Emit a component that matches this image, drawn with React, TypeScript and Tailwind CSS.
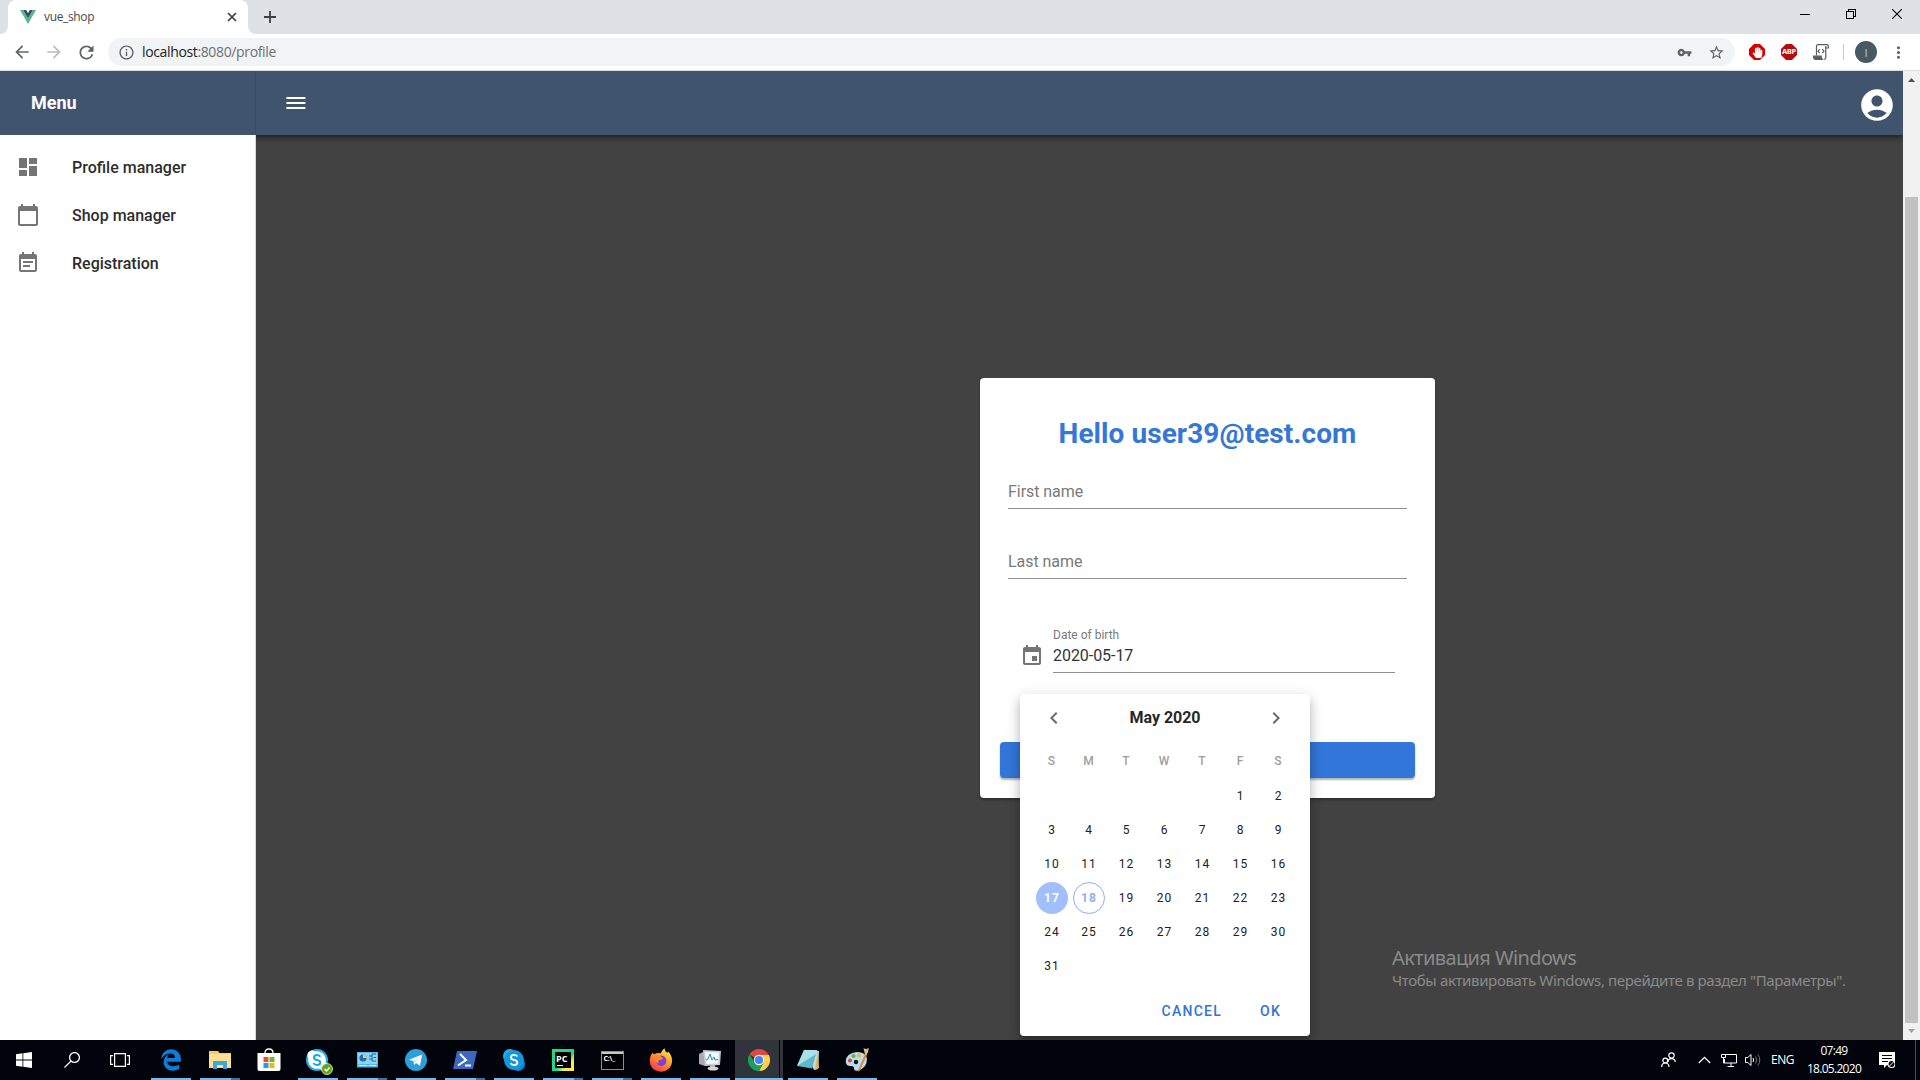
import React from "react";
import {
  MdAccountCircle,
  MdArrowBack,
  MdArrowForward,
  MdCalendarToday,
  MdChevronLeft,
  MdChevronRight,
  MdDashboard,
  MdEvent,
  MdEventNote,
  MdInfoOutline,
  MdMoreVert,
  MdRefresh,
  MdStarBorder,
  MdVpnKey,
} from "react-icons/md";
import { FaEdgeLegacy, FaHandPaper, FaSkype } from "react-icons/fa";

function TabStrip() {
  return (
    <div className="flex h-[34px] items-stretch bg-[#dee1e6]">
      <div className="h-full w-2 bg-white">
        <div className="h-full w-2 rounded-br-lg bg-[#dee1e6]" />
      </div>
      <div className="flex w-60 items-center rounded-t-lg bg-white pr-[10px] pl-3">
        <svg width="16" height="14" viewBox="0 0 16 14">
          <path d="M0 0h3.2L8 8.2 12.8 0H16L8 14z" fill="#53b987" />
          <path d="M3.2 0h3L8 3.2 9.8 0h3L8 8.2z" fill="#34495e" />
        </svg>
        <span className="ml-2 text-[12px] leading-4 tracking-[-0.35px] text-[#45494d]">vue_shop</span>
        <svg className="ml-auto" width="12" height="12" viewBox="0 0 12 12" stroke="#3c4043" strokeWidth="1.7">
          <path d="M2 2l8 8M10 2l-8 8" />
        </svg>
      </div>
      <div className="h-full w-2 bg-white">
        <div className="h-full w-2 rounded-bl-lg bg-[#dee1e6]" />
      </div>
      <svg className="mt-[11px] ml-2" width="12" height="12" viewBox="0 0 12 12" stroke="#3c4043" strokeWidth="1.8">
        <path d="M6 0v12M0 6h12" />
      </svg>
      <div className="mt-[9px] mr-[18px] ml-auto flex gap-9">
        <svg width="10" height="10" viewBox="0 0 10 10" stroke="#000" shapeRendering="crispEdges">
          <path d="M0 5.5h10" />
        </svg>
        <svg width="10" height="10" viewBox="0 0 10 10" stroke="#000" fill="none" shapeRendering="crispEdges">
          <path d="M.5 2.5h7v7h-7zM2.5 2.5v-2h7v7h-2" />
        </svg>
        <svg width="10" height="10" viewBox="0 0 10 10" stroke="#000" strokeWidth="1.1">
          <path d="M0 0l10 10M10 0L0 10" />
        </svg>
      </div>
    </div>
  );
}

function Toolbar() {
  return (
    <div className="flex h-[37px] items-center border-b border-[#d9dbde] bg-white pl-3 text-[#5f6368]">
      <MdArrowBack size={20} />
      <MdArrowForward size={20} className="ml-3 text-[#babcbe]" />
      <MdRefresh size={21} className="ml-3" />
      <div className="ml-[11px] flex h-7 w-[1627px] items-center rounded-full bg-[#f1f3f4] pr-[10px] pl-[10px]">
        <MdInfoOutline size={17} />
        <span className="ml-[7px] text-[14px] leading-5 tracking-[-0.36px] text-[#6c7074]">
          <span className="text-[#202124]">localhost</span>:8080/profile
        </span>
        <MdVpnKey size={15} className="ml-auto" />
        <MdStarBorder size={17} className="ml-4" />
      </div>
      <div className="ml-[14px] flex items-center">
        <div className="relative flex size-4 items-center justify-center">
          <svg className="absolute inset-0" width="16" height="16" viewBox="0 0 16 16">
            <path d="M5 0h6l5 5v6l-5 5H5l-5-5V5z" fill="#d50000" />
          </svg>
          <FaHandPaper size={11} className="relative text-white" />
        </div>
        <div className="relative ml-4 flex size-4 items-center justify-center">
          <svg className="absolute inset-0" width="16" height="16" viewBox="0 0 16 16">
            <path d="M5 0h6l5 5v6l-5 5H5l-5-5V5z" fill="#b80d0d" />
          </svg>
          <span className="relative text-[7.5px] leading-none font-bold tracking-[-0.3px] text-white">ABP</span>
        </div>
        <svg className="ml-4" width="16" height="16" viewBox="0 0 16 16" fill="none" stroke="#5a5d61" strokeWidth="1.2">
          <path d="M3.5 11.5V2.2Q3.5.7 5 .7h9q1.300 0 1.300 1.500V4H12.800" />
          <path d="M12.800 2v11.500q0 1.800-1.800 1.800" />
          <path d="M.6 12.200h7.600v1.400q.2 1.700 2 1.700H2.200Q.6 15.300.6 12.200z" fill="#5a5d61" />
          <path d="M6.800 5.200L5 7.200l1.800 2M9.200 5.200l1.800 2-1.800 2" />
        </svg>
        <div className="ml-[14px] h-4 w-px bg-[#c8cacd]" />
        <div className="ml-[11px] flex size-[22px] items-center justify-center rounded-full bg-[#455a64] text-[11px] leading-none text-[#c4cdd1]">
          I
        </div>
        <MdMoreVert size={19} className="ml-[12px]" />
      </div>
    </div>
  );
}

const menu = [
  { label: "Profile manager", icon: MdDashboard },
  { label: "Shop manager", icon: MdCalendarToday },
  { label: "Registration", icon: MdEventNote },
];

function Sidebar() {
  return (
    <aside className="relative z-20 w-64 shrink-0 border-r border-[#d8d8d8] bg-white pt-2">
      {menu.map(({ label, icon: Icon }) => (
        <div key={label} className="flex h-12 items-center px-4">
          <Icon size={24} className="text-[#757575]" />
          <span className="mt-[2px] ml-8 text-[16px] leading-5 font-medium text-[#2d2d2d]">{label}</span>
        </div>
      ))}
    </aside>
  );
}

function AppBar() {
  return (
    <header className="relative z-10 flex h-16 bg-[#41546e] text-white shadow-[0_2px_4px_-1px_rgba(0,0,0,0.3),0_4px_5px_rgba(0,0,0,0.2),0_1px_10px_rgba(0,0,0,0.15)]">
      <div className="flex w-64 items-center border-r border-[#394b64] pl-[31px]">
        <span className="text-[18px] leading-6 font-bold">Menu</span>
      </div>
      <div className="flex flex-1 items-center pr-[7px] pl-[30px]">
        <svg width="20" height="12" viewBox="0 0 20 12" fill="#fff">
          <path d="M.4 0h19v2H.4zM.4 5h19v2H.4zM.4 10h19v2H.4z" />
        </svg>
        <MdAccountCircle size={38} className="mt-1 ml-auto" />
      </div>
    </header>
  );
}

const weekdays = ["S", "M", "T", "W", "T", "F", "S"];
const blanks = [0, 1, 2, 3, 4];
const days = Array.from({ length: 31 }, (_, i) => i + 1);

function Day({ n }: { n: number }) {
  if (n === 17)
    return (
      <span className="flex size-8 items-center justify-center rounded-full bg-[#a0bffc] pl-px font-bold text-white">
        17
      </span>
    );
  if (n === 18)
    return (
      <span className="flex size-8 items-center justify-center rounded-full border border-[#8cb0f2] pl-px font-bold text-[#8cb0f5]">
        18
      </span>
    );
  return <span className="pl-px">{n}</span>;
}

function DatePicker() {
  return (
    <div className="absolute top-[316px] left-10 z-10 flex h-[342px] w-[290px] flex-col rounded bg-white text-[#212121] shadow-[0_5px_5px_-3px_rgba(0,0,0,0.2),0_8px_10px_1px_rgba(0,0,0,0.14),0_3px_14px_2px_rgba(0,0,0,0.12)]">
      <div className="flex h-12 items-center justify-between px-[22px] text-[#6b6b6b]">
        <MdChevronLeft size={24} />
        <span className="text-[16px] leading-5 font-bold tracking-[-0.05px] text-[#272727]">May 2020</span>
        <MdChevronRight size={24} />
      </div>
      <div className="grid grid-cols-[37px_37px_38px_38px_38px_38px_38px] pl-[13px] text-[12px] tracking-[1px]">
        {weekdays.map((d, i) => (
          <div key={i} className="flex h-[37px] items-center justify-center pl-px font-medium text-[#9e9e9e]">
            {d}
          </div>
        ))}
        {blanks.map((b) => (
          <div key={b} className="h-[34px]" />
        ))}
        {days.map((n) => (
          <div key={n} className="flex h-[34px] items-center justify-center">
            <Day n={n} />
          </div>
        ))}
      </div>
      <div className="mt-auto flex h-[50px] items-center justify-end gap-[38px] pr-[29px] text-[14px] font-medium tracking-[1.25px] text-[#3275d2]">
        <span>CANCEL</span>
        <span>OK</span>
      </div>
    </div>
  );
}

function ProfileCard() {
  return (
    <section className="relative h-[420px] w-[455px] rounded bg-white shadow-[0_2px_3px_rgba(0,0,0,0.3)]">
      <h1 className="pt-[38px] text-center text-[28px] leading-9 font-bold tracking-[0.07px] text-[#3477d6]">
        Hello user39@test.com
      </h1>
      <div className="mx-7 mt-[27px] flex h-[30px] items-center border-b border-[#8f8f8f] pb-1 text-[16px] tracking-[-0.05px] text-[#7a7a7a]">
        First name
      </div>
      <div className="mx-7 mt-[40px] flex h-[30px] items-center border-b border-[#8f8f8f] pb-1 text-[16px] tracking-[-0.05px] text-[#7a7a7a]">
        Last name
      </div>
      <div className="mt-12 mr-10 ml-10 flex gap-[9px]">
        <MdEvent size={24} className="mt-[17px] text-[#757575]" />
        <div className="flex h-[46px] flex-1 flex-col border-b border-[#8f8f8f]">
          <span className="text-[12px] leading-4 text-[#7a7a7a]">Date of birth</span>
          <span className="mt-[3px] text-[16px] leading-5 tracking-[-0.05px] text-[#333333]">2020-05-17</span>
        </div>
      </div>
      <div className="mx-5 mt-[69px] h-9 rounded bg-[#3176d8] shadow-[0_2px_2px_rgba(0,0,0,0.3)]" />
      <DatePicker />
    </section>
  );
}

function Scrollbar() {
  return (
    <div className="flex w-[17px] flex-col items-center bg-[#f1f1f1]">
      <svg className="mt-[7px]" width="7" height="4" viewBox="0 0 7 4" fill="#505050">
        <path d="M0 4h7L3.5 0z" />
      </svg>
      <div className="mt-[115px] h-[826px] w-[13px] bg-[#c1c1c1]" />
      <svg className="mt-[6px]" width="7" height="4" viewBox="0 0 7 4" fill="#a3a3a3">
        <path d="M0 0h7L3.5 4z" />
      </svg>
    </div>
  );
}

const Edge = () => <FaEdgeLegacy size={22} color="#0a7ddb" />;

const Explorer = () => (
  <svg width="22" height="18" viewBox="0 0 22 18">
    <path d="M0 0h9l1.5 2H22v15H0z" fill="#f3cf6b" />
    <path d="M0 3h22v14H0z" fill="#fbe08f" />
    <path d="M4 10h14v8h-4v-4H8v4H4z" fill="#3ba7dd" />
  </svg>
);

const Store = () => (
  <svg width="24" height="24" viewBox="0 0 24 24">
    <path d="M8 7V5q0-4 4-4t4 4v2" fill="none" stroke="#fff" strokeWidth="1.3" />
    <path d="M.5 5h23v16q0 2-2 2h-19q-2 0-2-2z" fill="#fff" />
    <path d="M6.500 9h5v5h-5z" fill="#e8502a" />
    <path d="M12.500 9h5v5h-5z" fill="#7ab51d" />
    <path d="M6.500 15h5v5h-5z" fill="#1f9fe0" />
    <path d="M12.500 15h5v5h-5z" fill="#f7b50c" />
  </svg>
);

const SkypeBusiness = () => (
  <div className="relative mt-px size-6">
    <div className="absolute top-0 left-0 flex size-[22px] items-center justify-center rounded-full bg-[#27aee5]">
      <FaSkype size={22} color="#ffffff" />
    </div>
    <svg className="absolute top-[3px] left-[4px]" width="14" height="16" viewBox="0 0 14 16" fill="none">
      <circle cx="7" cy="8" r="6.500" fill="#fff" />
      <path
        d="M10.300 4.800Q9.200 3.100 7 3.100q-3 0-3 2.500 0 1.900 3 2.500 3.300.6 3.300 2.500 0 2.400-3.300 2.400-2.500 0-3.500-1.900"
        stroke="#16a6e0"
        strokeWidth="2"
      />
    </svg>
    <svg className="absolute -right-[3px] -bottom-[2px]" width="12" height="12" viewBox="0 0 12 12">
      <circle cx="6" cy="6" r="5.500" fill="#63a51a" stroke="#e8f5d8" strokeWidth=".8" />
      <path d="M3.500 6l2 2 3-3.500" stroke="#fff" fill="none" strokeWidth="1.400" />
    </svg>
  </div>
);

const ControlPanel = () => (
  <svg width="21" height="16" viewBox="0 0 21 16">
    <path d="M0 0h21v15.500H0z" fill="#5bb4e5" />
    <path d="M1 1h19v11H1z" fill="#8fd3f5" />
    <circle cx="6" cy="6" r="3.600" fill="#1f6fb5" />
    <path d="M6 6V2.400A3.600 3.600 0 0 1 9.600 6z" fill="#f4c842" />
    <path d="M12 4h3v-2h4M15 4v5h4M12 7h3M16.500 5.500H19" stroke="#1b6aa5" fill="none" />
    <path d="M2 13.500h7M12 13.500h7" stroke="#e8f7ff" />
    <path d="M9 13.500h2" stroke="#f6c444" />
  </svg>
);

const Telegram = () => (
  <svg width="22" height="22" viewBox="0 0 22 22">
    <circle cx="11" cy="11" r="11" fill="#2b9fd9" />
    <path d="M4 10.800L17.200 5.500 15 16.800l-4-2.900-2 2-.4-3.700z" fill="#fff" />
    <path d="M8.600 12.200l6-4.700-4.700 5.600-.9 2.800z" fill="#b8dcef" />
  </svg>
);

const PowerShell = () => (
  <svg width="24" height="18" viewBox="0 0 24 18">
    <path d="M4 0h20l-4 18H0z" fill="#3e67c4" />
    <path d="M7 3l6 6-8 5.500M12 14.500h6" stroke="#fff" fill="none" strokeWidth="2" />
  </svg>
);

const Skype = () => (
  <svg width="22" height="22" viewBox="0 0 22 22">
    <circle cx="7" cy="7" r="7" fill="#27aee5" />
    <circle cx="15" cy="15" r="7" fill="#0a84d0" />
    <circle cx="11" cy="11" r="10" fill="#1397de" />
    <path
      d="M14.300 7.600Q13.200 5.900 11 5.900q-3 0-3 2.500 0 1.900 3 2.500 3.300.6 3.300 2.600 0 2.500-3.300 2.500-2.500 0-3.500-1.900"
      fill="none"
      stroke="#fff"
      strokeWidth="1.900"
    />
  </svg>
);

const PyCharm = () => (
  <div className="flex size-[22px] items-center justify-center bg-linear-to-br from-[#21d789] from-60% to-[#f9ee4a] to-75%">
    <div className="flex size-4 flex-col bg-black pt-[2px] pl-px">
      <span className="text-[9px] leading-[9px] font-bold text-white">PC</span>
      <span className="mt-[2px] ml-px h-px w-[6px] bg-white" />
    </div>
  </div>
);

const Terminal = () => (
  <div className="h-[19px] w-[23px] border border-[#8d8d8d] bg-black">
    <div className="h-[2px] bg-[#c9c9c9]" />
    <div className="pl-[2px] text-[7px] leading-[9px] font-bold tracking-[-0.2px] text-white">C:\_</div>
  </div>
);

const Firefox = () => (
  <svg width="24" height="24" viewBox="0 0 24 24">
    <defs>
      <linearGradient id="fox" x1=".8" y1="0" x2=".2" y2="1">
        <stop offset="0" stopColor="#fff04d" />
        <stop offset=".45" stopColor="#ff9a27" />
        <stop offset="1" stopColor="#fb2d55" />
      </linearGradient>
    </defs>
    <path
      d="M3.600 4.500Q4 6 5.500 6.300 7 5 9.500 5q1.500 0 2 .6 1.500-3.600 4-5.300Q15.500 3 18 4.800q1-.3 1.200-1.300 4 4.500 3.900 9Q23 18 19.500 21 16 23.800 12 23.700 6 23.600 2.700 19.300.5 16 .7 11.500.900 8 3.600 4.500z"
      fill="url(#fox)"
    />
    <circle cx="12.200" cy="12.800" r="5.200" fill="#8040d8" />
    <path d="M6 8q3-1.500 6 .500l2 2q-1.500 1.500-4 1.500-1 2-.5 3.500Q5 14 6 8z" fill="#ff8a25" />
  </svg>
);

const Monitor = () => (
  <svg width="24" height="22" viewBox="0 0 24 22">
    <path d="M1 5l6-3v15l-6-2z" fill="#a9a9a9" />
    <path d="M5 1l18 1-1 14-15 1z" fill="#c9cdd0" />
    <path d="M7 3l14 .600-.800 11L8.500 15z" fill="#f2f8fb" />
    <path d="M8 11l2-1 2-5 2 6 2-3 1 3 3-.500" stroke="#2988bd" fill="none" />
    <path d="M12 16h5v3h-5z" fill="#b5b5b5" />
    <ellipse cx="15" cy="19.500" rx="5.500" ry="2" fill="#d5d5d5" />
  </svg>
);

const Chrome = () => (
  <svg width="22" height="22" viewBox="0 0 22 22">
    <path d="M11 11L1.500 5.500A11 11 0 0 1 20.500 5.500L20.500 6H11z" fill="#dd4b3e" />
    <path d="M20.530 5.500A11 11 0 0 1 11 22L15.330 13.500 11 6h9.800z" fill="#fdd04a" />
    <path d="M1.470 5.500A11 11 0 0 0 11 22l4.500-8H7z" fill="#1ba05b" />
    <circle cx="11" cy="11" r="5.200" fill="#f3f3f3" />
    <circle cx="11" cy="11" r="4.100" fill="#4484f3" />
  </svg>
);

const Notepad = () => (
  <svg width="24" height="22" viewBox="0 0 24 22">
    <path d="M8 1l15 1-1 18-4 1z" fill="#cfd4d6" />
    <path d="M22 2l1 17-4 2z" fill="#d8b565" />
    <path d="M8 1h13l-5 18.500L1 17z" fill="#5fb7c8" />
    <path d="M8 1h13l-1 4L1 17z" fill="#a9e0ea" />
  </svg>
);

const Paint = () => (
  <svg width="24" height="24" viewBox="0 0 24 24">
    <path d="M12 4Q21 4 22 11q0 9-9 11.500-4 1-4-2 0-2.500-2.500-2.500Q1 18.500.7 13.500 1 5 12 4z" fill="#b9dcf0" />
    <circle cx="5" cy="12.500" r="2" fill="#d84a32" />
    <circle cx="8.500" cy="8" r="2" fill="#6cb23e" />
    <circle cx="14" cy="7.500" r="2" fill="#e9b93a" />
    <circle cx="11" cy="14" r="2.200" fill="#0b1016" />
    <path d="M20 6l2 .500-7 16-2 1.200.500-2.500z" fill="#dc8c35" />
    <path d="M18.500 0q3 2 5-.300Q24 4 21.500 7L20 6.500z" fill="#e2bd8a" />
  </svg>
);

type Bar = "none" | "full" | "split";
type TaskItem = { icon: () => React.ReactElement; bar: Bar };

const tasks: TaskItem[] = [
  { icon: Edge, bar: "full" },
  { icon: Explorer, bar: "split" },
  { icon: Store, bar: "none" },
  { icon: SkypeBusiness, bar: "full" },
  { icon: ControlPanel, bar: "split" },
  { icon: Telegram, bar: "full" },
  { icon: PowerShell, bar: "split" },
  { icon: Skype, bar: "full" },
  { icon: PyCharm, bar: "split" },
  { icon: Terminal, bar: "split" },
  { icon: Firefox, bar: "full" },
  { icon: Monitor, bar: "full" },
];
const tasksAfter: TaskItem[] = [
  { icon: Notepad, bar: "full" },
  { icon: Paint, bar: "full" },
];

function Task({ icon: Icon, bar }: TaskItem) {
  return (
    <div className="flex h-10 w-[49px] flex-col pl-1">
      <div className="flex h-[38px] w-10 items-center justify-center pt-[2px]">
        <Icon />
      </div>
      {bar !== "none" && (
        <div className="flex h-[2px] w-10 bg-[#76b9ed]">
          {bar === "split" && <div className="ml-auto w-[9px] bg-[#44709a]" />}
        </div>
      )}
    </div>
  );
}

function Taskbar() {
  return (
    <footer className="flex h-10 items-center bg-[#01050b] text-white">
      <div className="flex w-12 justify-center">
        <svg width="16" height="16" viewBox="0 0 16 16" fill="#fff">
          <path d="M0 2.200l6.500-.9v6.300H0zM7.300 1.200L16 0v7.600H7.300zM0 8.400h6.500v6.300L0 13.800zM7.300 8.400H16V16l-8.700-1.200z" />
        </svg>
      </div>
      <div className="flex w-12 justify-center">
        <svg width="16" height="16" viewBox="0 0 16 16" stroke="#fff" strokeWidth="1.300" fill="none">
          <circle cx="10.500" cy="5.500" r="4.900" />
          <path d="M7 9L.5 15.500" />
        </svg>
      </div>
      <div className="mr-[3px] flex w-12 justify-center">
        <svg width="20" height="14" viewBox="0 0 20 14" stroke="#fff" strokeWidth="1.200" fill="none">
          <path d="M4.600.600h10.800v12.800H4.600zM3 2.600H.600v8.800H3M17 2.600h2.400v8.800H17" />
        </svg>
      </div>
      {tasks.map((t, i) => (
        <Task key={i} {...t} />
      ))}
      <div className="flex h-10 w-[49px] flex-col">
        <div className="flex h-[38px]">
          <div className="flex w-11 items-center justify-center bg-[#31353b] pt-[2px] pl-[3px]">
            <Chrome />
          </div>
          <div className="ml-px w-[3px] bg-[#31353b]" />
        </div>
        <div className="h-[2px] w-12 bg-[#76b9ed]" />
      </div>
      {tasksAfter.map((t, i) => (
        <Task key={i} {...t} />
      ))}
      <svg className="ml-auto" width="15" height="16" viewBox="0 0 15 16" stroke="#fff" strokeWidth="1.200" fill="none">
        <circle cx="10.500" cy="3.500" r="2.700" />
        <path d="M7 10q0-3.400 3.500-3.400T14.300 10" />
        <circle cx="4.300" cy="8.500" r="2.400" />
        <path d="M.700 15q0-4 3.600-4T8 15" />
      </svg>
      <svg className="ml-[22px]" width="13" height="8" viewBox="0 0 13 8" stroke="#fff" strokeWidth="1.300" fill="none">
        <path d="M.800 7l5.700-5.700L12.200 7" />
      </svg>
      <svg className="ml-[10px]" width="16" height="13" viewBox="0 0 16 13" stroke="#fff" fill="none">
        <path d="M4.500.500h11v8.500H3.500V5M10 9v3M6.500 12.500H13M.500.500h4v3h-4zM2.500 3.500V9h1" />
      </svg>
      <svg className="ml-[8px]" width="16" height="14" viewBox="0 0 16 14" stroke="#fff" fill="none">
        <path d="M.500 4.500h2.300L6 1.500v11l-3.200-3H.500z" />
        <path d="M8 5q1.200 2 0 4" />
        <path d="M10.500 3.500q2.500 3.500 0 7M12.800 1.500q4 5.500 0 11" stroke="#777" />
      </svg>
      <span className="ml-[10px] text-[12px] leading-4 tracking-[-0.5px]">ENG</span>
      <div className="ml-[13px] flex w-[54px] flex-col items-center text-[12px] leading-[18px] tracking-[-0.7px] whitespace-nowrap">
        <span>07:49</span>
        <span>18.05.2020</span>
      </div>
      <svg className="mr-5 ml-[18px]" width="16" height="17" viewBox="0 0 16 17">
        <path d="M0 0h16v13H8l-3 3v-3H0z" fill="#fff" />
        <path d="M3 3.500h10M3 6.500h10M3 9.500h6" stroke="#01050b" />
        <circle cx="12.500" cy="12" r="3.500" fill="#01050b" stroke="#fff" strokeWidth="1.100" />
        <path d="M10 14.500l5-5" stroke="#fff" />
      </svg>
      <div className="mr-1 h-10 w-px bg-[#4a4d52]" />
    </footer>
  );
}

export default function App() {
  return (
    <div className="flex h-[1080px] w-[1920px] flex-col overflow-hidden bg-[#424242] font-['Open_Sans',sans-serif]">
      <TabStrip />
      <Toolbar />
      <div className="flex h-[969px]">
        <div className="flex flex-1 flex-col overflow-hidden font-[Roboto,sans-serif]">
          <AppBar />
          <div className="flex flex-1">
            <Sidebar />
            <main className="relative flex-1 pt-[243px] pl-[724px]">
              <ProfileCard />
              <div className="absolute top-[810px] left-[1136px] font-['Noto_Sans',sans-serif] whitespace-nowrap text-[#8a8a8a]">
                <div className="text-[20px] leading-[26px] tracking-[-0.6px]">Активация Windows</div>
                <div className="-mt-px text-[15px] leading-5 tracking-[-0.36px]">
                  Чтобы активировать Windows, перейдите в раздел "Параметры".
                </div>
              </div>
            </main>
          </div>
        </div>
        <Scrollbar />
      </div>
      <Taskbar />
    </div>
  );
}
